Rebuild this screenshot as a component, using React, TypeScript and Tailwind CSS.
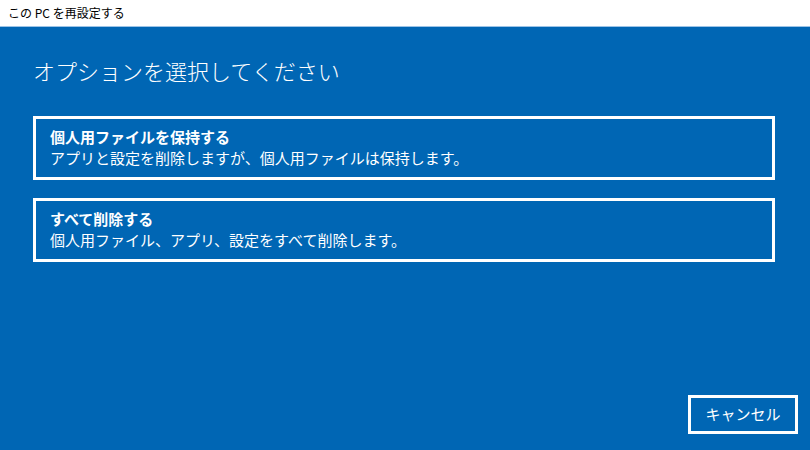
import React from "react";

const font = { fontFamily: '"Noto Sans CJK JP", "Noto Sans", sans-serif' };

function Option({ title, desc }: { title: string; desc: string }) {
  return (
    <div className="border-[3px] border-white h-[64px] pl-[14px] pt-[7px] flex flex-col">
      <div className="text-[15px] font-bold leading-[21px] text-white">{title}</div>
      <div className="text-[15px] leading-[22px] text-white">{desc}</div>
    </div>
  );
}

export default function App() {
  return (
    <div className="w-[810px] h-[450px] flex flex-col overflow-hidden" style={font}>
      <div className="h-[27px] bg-white flex items-center pl-[8px] text-[12px] text-black border-b border-[#9cc3e6]">
        この PC を再設定する
      </div>
      <div className="flex-1 bg-[#0066b4] flex flex-col px-[33px] pt-[26px]">
        <div className="text-[22px] font-light text-white leading-[34px]">
          オプションを選択してください
        </div>
        <div className="flex flex-col gap-[18px] mt-[29px] mr-[2px]">
          <Option
            title="個人用ファイルを保持する"
            desc="アプリと設定を削除しますが、個人用ファイルは保持します。"
          />
          <Option
            title="すべて削除する"
            desc="個人用ファイル、アプリ、設定をすべて削除します。"
          />
        </div>
        <div className="flex-1" />
        <div className="flex justify-end mb-[16px] -mr-[21px]">
          <button className="w-[110px] h-[39px] border-[3px] border-white text-white text-[15px] flex items-center justify-center">
            キャンセル
          </button>
        </div>
      </div>
    </div>
  );
}
